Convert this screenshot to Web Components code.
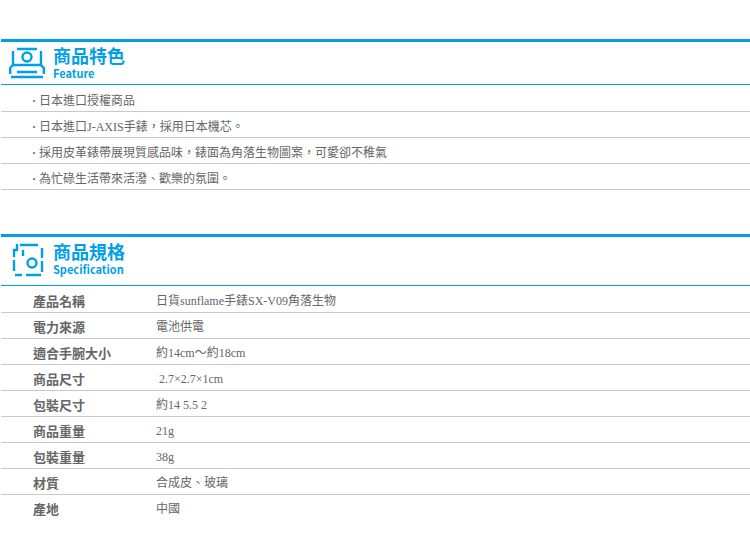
<!DOCTYPE html>
<html lang="zh-Hant">
<head>
<meta charset="UTF-8">
<meta name="viewport" content="width=device-width, initial-scale=1">
<title>商品特色</title>
<style>
    body {
        --blue: #009fe8;
        --line: #c9c9c9;
        margin: 0;
        padding: 39px 0 12px 1px;
        background: #fff;
        color: #666;
        font-family: "Liberation Serif", "Noto Sans CJK TC", serif;
        font-size: 12px;
    }
</style>
</head>
<body>
<product-section heading="商品特色" subheading="Feature">
    <svg slot="icon" width="38" height="36" viewBox="0 0 38 36" fill="none" stroke="#009fe8" stroke-width="2.4" aria-hidden="true">
        <path d="M8 4H28M4 6V20H32V6M8 27H28M2 32H34"/>
        <path d="M1.2 29V23L4 20M34.8 29V23L32 20"/>
        <circle cx="18" cy="12" r="4.5"/>
    </svg>
    <feature-list>
        <feature-item>日本進口授權商品</feature-item>
        <feature-item>日本進口J-AXIS手錶，採用日本機芯。</feature-item>
        <feature-item>採用皮革錶帶展現質感品味，錶面為角落生物圖案，可愛卻不稚氣</feature-item>
        <feature-item>為忙碌生活帶來活潑、歡樂的氛圍。</feature-item>
    </feature-list>
</product-section>
<product-section heading="商品規格" subheading="Specification" tall>
    <svg slot="icon" width="38" height="36" viewBox="0 0 38 36" fill="none" stroke="#009fe8" stroke-width="2.4" aria-hidden="true">
        <path d="M11 4H29M8 3V9H5V16M5 19V30M6 34H13M17 34H32M33 7V17M33 20V31M14 9V15"/>
        <circle cx="23" cy="22" r="4.5"/>
    </svg>
    <spec-table></spec-table>
</product-section>

<script>
class ProductSection extends HTMLElement {
    constructor() {
        super();
        this.attachShadow({ mode: 'open' });
    }

    connectedCallback() {
        const heading = this.getAttribute('heading');
        const subheading = this.getAttribute('subheading');

        this.shadowRoot.innerHTML = `
            <style>
                :host {
                    display: block;
                    margin-bottom: 44px;
                }
                :host(:last-of-type) {
                    margin-bottom: 0;
                }
                header {
                    display: flex;
                    gap: 6px;
                    align-items: flex-start;
                    padding: 3px 0 3px 8px;
                    border-top: 3px solid var(--blue);
                    border-bottom: 1px solid var(--blue);
                    color: var(--blue);
                }
                :host([tall]) header {
                    padding-top: 4px;
                    padding-bottom: 8px;
                }
                h2, p {
                    margin: 0;
                }
                h2 {
                    font: 700 18px/20px "Noto Sans CJK TC", sans-serif;
                }
                p {
                    font: 700 11px/16px "Noto Sans CJK TC", sans-serif;
                }
            </style>
            <header>
                <slot name="icon"></slot>
                <div>
                    <h2>${heading}</h2>
                    <p>${subheading}</p>
                </div>
            </header>
            <slot></slot>
        `;
    }
}

customElements.define('product-section', ProductSection);


class FeatureList extends HTMLElement {
    constructor() {
        super();
        this.attachShadow({ mode: 'open' });
    }

    connectedCallback() {
        this.setAttribute('role', 'list');
        this.shadowRoot.innerHTML = `
            <style>
                :host {
                    display: block;
                    padding-top: 1px;
                }
            </style>
            <slot></slot>
        `;
    }
}

customElements.define('feature-list', FeatureList);


class FeatureItem extends HTMLElement {
    constructor() {
        super();
        this.attachShadow({ mode: 'open' });
    }

    connectedCallback() {
        this.setAttribute('role', 'listitem');
        this.shadowRoot.innerHTML = `
            <style>
                :host {
                    display: flex;
                    padding: 6px 0 0 31px;
                    border-bottom: 1px solid var(--line);
                    line-height: 19px;
                }
                .dot {
                    width: 7px;
                    font-weight: bold;
                }
            </style>
            <span class="dot">·</span>
            <span><slot></slot></span>
        `;
    }
}

customElements.define('feature-item', FeatureItem);


const specs = [
    ['產品名稱', '日貨sunflame手錶SX-V09角落生物'],
    ['電力來源', '電池供電'],
    ['適合手腕大小', '約14cm～約18cm'],
    ['商品尺寸', '\u00a02.7×2.7×1cm'],
    ['包裝尺寸', '約14 5.5 2'],
    ['商品重量', '21g'],
    ['包裝重量', '38g'],
    ['材質', '合成皮、玻璃'],
    ['產地', '中國']
];

class SpecTable extends HTMLElement {
    constructor() {
        super();
        this.attachShadow({ mode: 'open' });
    }

    connectedCallback() {
        const rows = specs.map(([name, value]) => `
            <tr><th scope="row">${name}</th><td>${value}</td></tr>
        `).join('');

        this.shadowRoot.innerHTML = `
            <style>
                :host {
                    display: block;
                    padding-top: 1px;
                }
                table {
                    width: 100%;
                    border-spacing: 0;
                    font-size: 12px;
                }
                th, td {
                    padding: 4px 0 0;
                    border-bottom: 1px solid var(--line);
                    line-height: 21px;
                    text-align: left;
                    vertical-align: top;
                }
                th {
                    width: 123px;
                    padding-left: 32px;
                    font-size: 13px;
                }
                tr:last-child > * {
                    border-bottom: 0;
                }
            </style>
            <table>${rows}</table>
        `;
    }
}

customElements.define('spec-table', SpecTable);
</script>
</body>
</html>
